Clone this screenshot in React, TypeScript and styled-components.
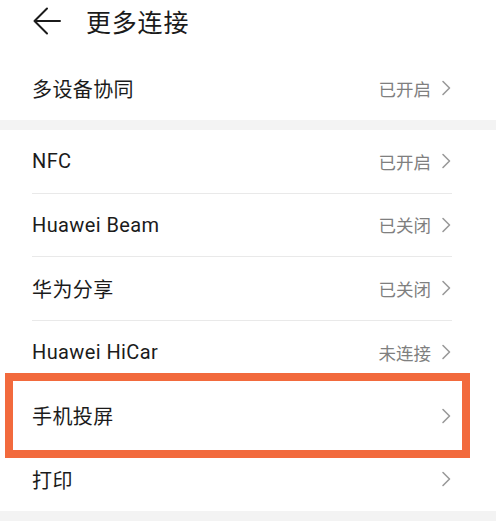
import React from "react";
import styled, { createGlobalStyle } from "styled-components";

const GlobalStyle = createGlobalStyle`
    html, body {
        margin: 0;
        padding: 0;
        background: #ffffff;
    }
    body {
        font-family: Roboto, "Noto Sans CJK SC", "Noto Sans", sans-serif;
        color: #1b1b1b;
    }
`;

const Page = styled.div`
    width: 500px;
    height: 532px;
    overflow: hidden;
    background: #ffffff;
`;

const Header = styled.header`
    box-sizing: border-box;
    height: 56px;
    padding: 0 0 14px 33px;
    display: flex;
    align-items: center;
    gap: 25px;
`;

const BackButton = styled.button`
    all: unset;
    display: flex;
    align-items: center;
    width: 28px;
    height: 28px;
    cursor: pointer;
`;

const Title = styled.h1`
    margin: 0;
    font-size: 25px;
    font-weight: 400;
    letter-spacing: 0.8px;
    color: #1b1b1b;
`;

const Group = styled.section`
    padding: 0 48px 0 32px;
    background: #ffffff;
`;

const Band = styled.div`
    height: 10px;
    background: #f3f3f3;
    margin-right: 4px;
`;

const Row = styled.div<{ $divider?: boolean; $height?: number }>`
    position: relative;
    box-sizing: border-box;
    height: ${(p) => p.$height ?? 63.5}px;
    display: flex;
    align-items: center;
    justify-content: space-between;
    border-bottom: ${(p) => (p.$divider ? "1px solid #e9e9e9" : "none")};
`;

const Label = styled.span`
    font-size: 20px;
    color: #1b1b1b;
    letter-spacing: 0.4px;
`;

const Trail = styled.div`
    display: flex;
    align-items: center;
    gap: 10px;
`;

const Value = styled.span`
    font-size: 17.5px;
    color: #7f7f7f;
`;

const Highlight = styled.div`
    position: absolute;
    top: -11px;
    bottom: -10px;
    left: -27px;
    right: -18px;
    border: 8px solid #f26a3d;
    pointer-events: none;
`;

const Chevron = () => (
    <svg width="11" height="16" viewBox="0 0 11 16" fill="none">
        <path d="M2 1.5 L8.5 8 L2 14.5" stroke="#9a9a9a" strokeWidth="1.6" strokeLinecap="round" strokeLinejoin="round" />
    </svg>
);

const BackArrow = () => (
    <svg width="28" height="28" viewBox="0 0 28 28" fill="none">
        <path d="M1.5 14 H27 M14 1.5 L1.5 14 L14 26.5" stroke="#1b1b1b" strokeWidth="2" strokeLinecap="round" strokeLinejoin="round" />
    </svg>
);

type Item = { label: string; value?: string; highlight?: boolean };

const connections: Item[] = [
    { label: "NFC", value: "已开启" },
    { label: "Huawei Beam", value: "已关闭" },
    { label: "华为分享", value: "已关闭" },
    { label: "Huawei HiCar", value: "未连接" },
    { label: "手机投屏", highlight: true },
    { label: "打印" },
];

export default function App() {
    return (
        <Page>
            <GlobalStyle />
            <Header>
                <BackButton aria-label="返回">
                    <BackArrow />
                </BackButton>
                <Title>更多连接</Title>
            </Header>

            <Group>
                <Row $height={64}>
                    <Label>多设备协同</Label>
                    <Trail>
                        <Value>已开启</Value>
                        <Chevron />
                    </Trail>
                </Row>
            </Group>
            <Band />

            <Group>
                {connections.map((item, i) => (
                    <Row key={item.label} $divider={i < 3}>
                        <Label>{item.label}</Label>
                        <Trail>
                            {item.value && <Value>{item.value}</Value>}
                            <Chevron />
                        </Trail>
                        {item.highlight && <Highlight />}
                    </Row>
                ))}
            </Group>
            <Band />
        </Page>
    );
}
